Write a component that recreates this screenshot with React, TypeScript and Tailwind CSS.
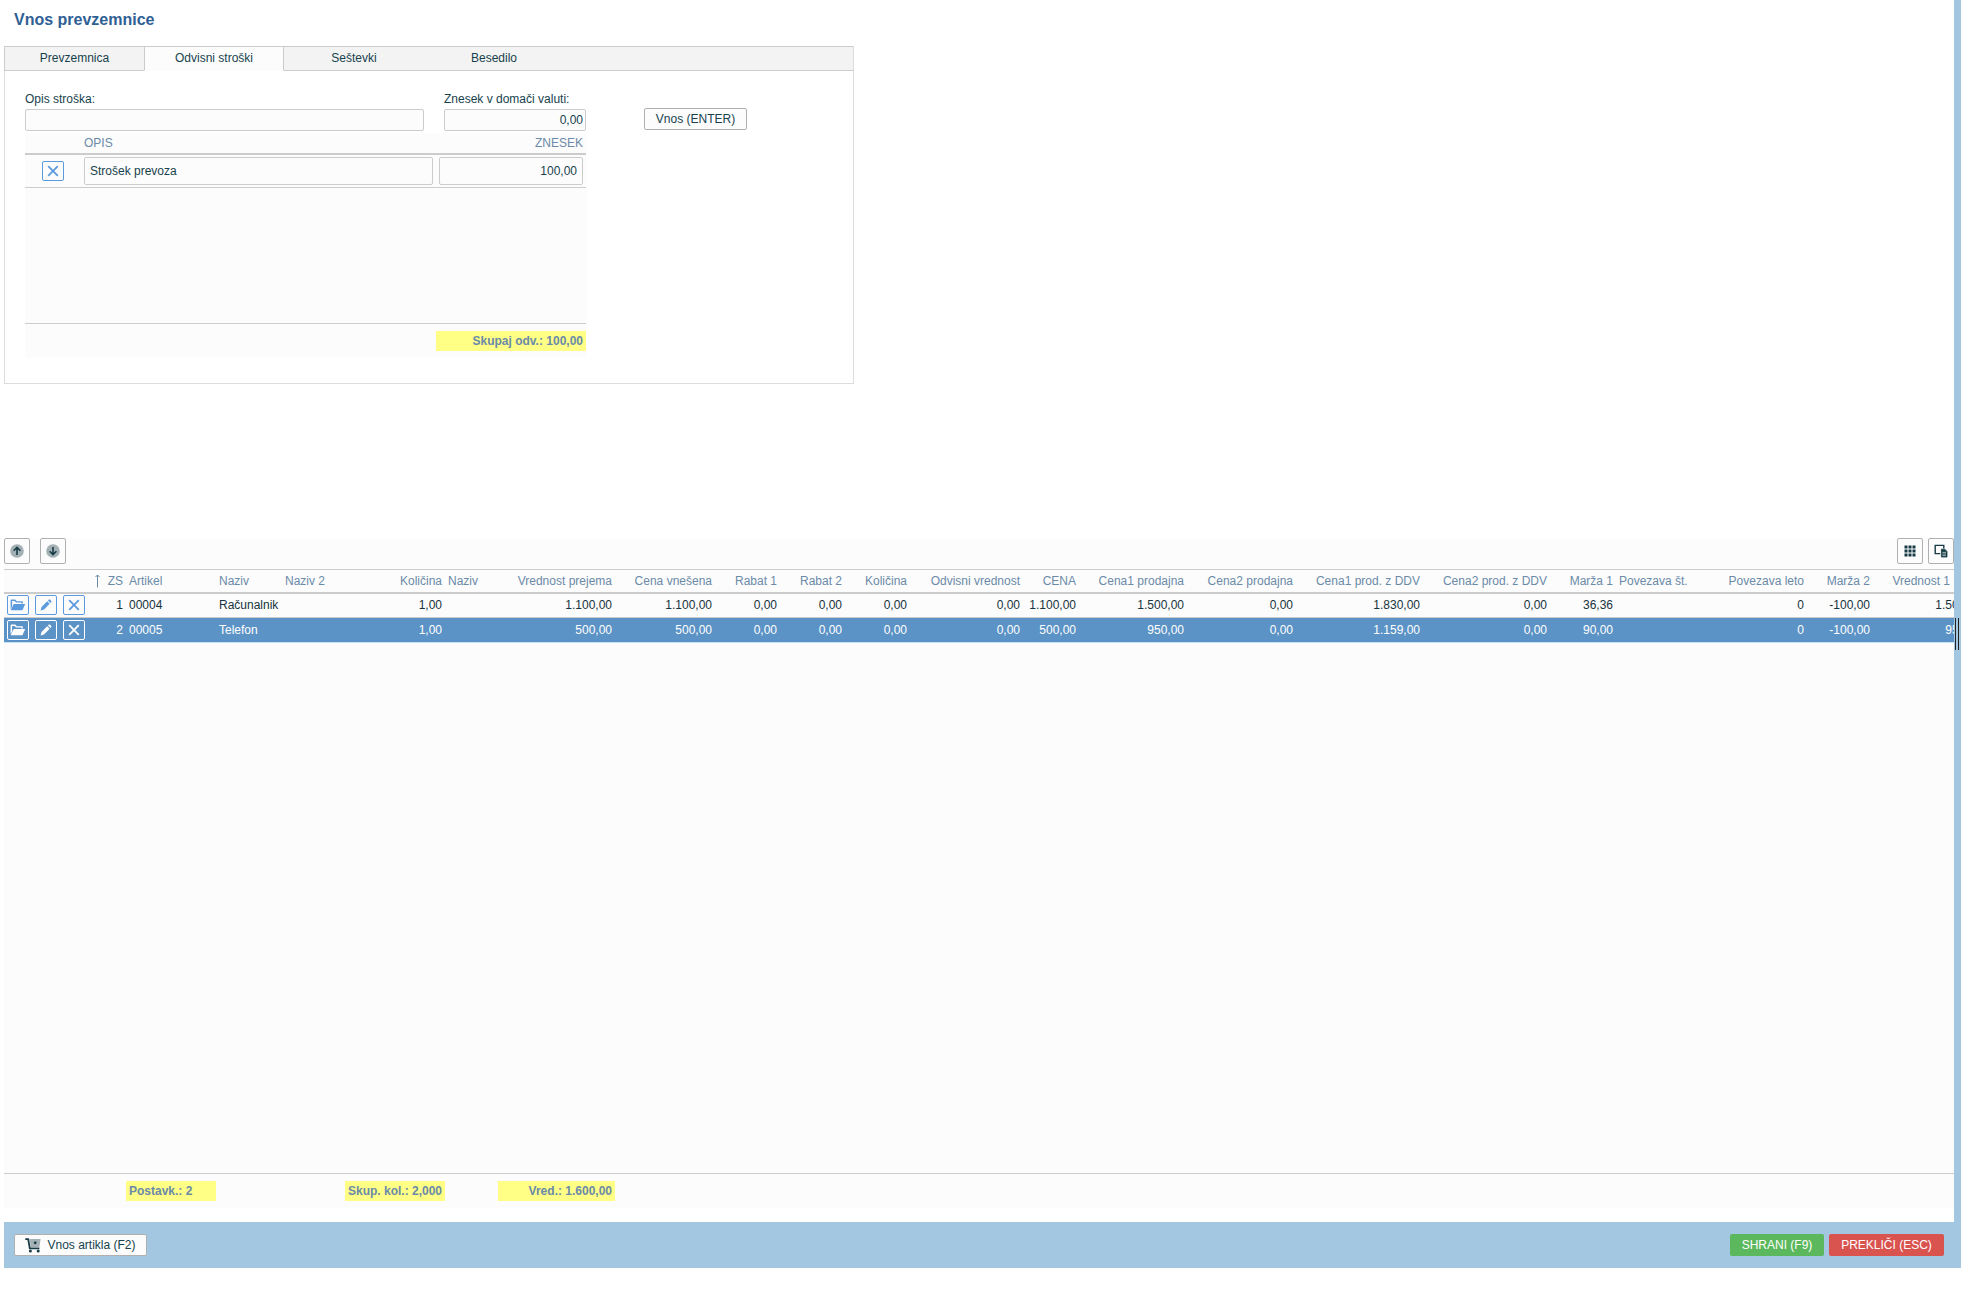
import { useState } from 'react';

type Column = {
  key: string;
  title: string;
  width: string;
  left?: boolean;
};

const columns: Column[] = [
  { key: 'artikel', title: 'Artikel', width: 'w-[90px]', left: true },
  { key: 'naziv', title: 'Naziv', width: 'w-[66px]', left: true },
  { key: 'naziv2', title: 'Naziv 2', width: 'w-[63px]', left: true },
  { key: 'kolicina', title: 'Količina', width: 'w-[100px]' },
  { key: 'nazivEm', title: 'Naziv', width: 'w-[53px]', left: true },
  { key: 'vrednostPrejema', title: 'Vrednost prejema', width: 'w-[117px]' },
  { key: 'cenaVnesena', title: 'Cena vnešena', width: 'w-[100px]' },
  { key: 'rabat1', title: 'Rabat 1', width: 'w-[65px]' },
  { key: 'rabat2', title: 'Rabat 2', width: 'w-[65px]' },
  { key: 'kolicina2', title: 'Količina', width: 'w-[65px]' },
  { key: 'odvisni', title: 'Odvisni vrednost', width: 'w-[113px]' },
  { key: 'cena', title: 'CENA', width: 'w-[56px]' },
  { key: 'cena1', title: 'Cena1 prodajna', width: 'w-[108px]' },
  { key: 'cena2', title: 'Cena2 prodajna', width: 'w-[109px]' },
  { key: 'cena1Ddv', title: 'Cena1 prod. z DDV', width: 'w-[127px]' },
  { key: 'cena2Ddv', title: 'Cena2 prod. z DDV', width: 'w-[127px]' },
  { key: 'marza1', title: 'Marža 1', width: 'w-[66px]' },
  { key: 'povezavaSt', title: 'Povezava št.', width: 'w-[84px]', left: true },
  { key: 'povezavaLeto', title: 'Povezava leto', width: 'w-[107px]' },
  { key: 'marza2', title: 'Marža 2', width: 'w-[66px]' },
  { key: 'vrednost1', title: 'Vrednost 1', width: 'w-[112px]' },
];

const rows: Record<string, string>[] = [
  {
    zs: '1', artikel: '00004', naziv: 'Računalnik', kolicina: '1,00',
    vrednostPrejema: '1.100,00', cenaVnesena: '1.100,00', rabat1: '0,00', rabat2: '0,00',
    kolicina2: '0,00', odvisni: '0,00', cena: '1.100,00', cena1: '1.500,00', cena2: '0,00',
    cena1Ddv: '1.830,00', cena2Ddv: '0,00', marza1: '36,36', povezavaLeto: '0',
    marza2: '-100,00', vrednost1: '1.500,00',
  },
  {
    zs: '2', artikel: '00005', naziv: 'Telefon', kolicina: '1,00',
    vrednostPrejema: '500,00', cenaVnesena: '500,00', rabat1: '0,00', rabat2: '0,00',
    kolicina2: '0,00', odvisni: '0,00', cena: '500,00', cena1: '950,00', cena2: '0,00',
    cena1Ddv: '1.159,00', cena2Ddv: '0,00', marza1: '90,00', povezavaLeto: '0',
    marza2: '-100,00', vrednost1: '950,00',
  },
];

const tabs = ['Prevzemnica', 'Odvisni stroški', 'Seštevki', 'Besedilo'];

function CloseIcon() {
  return (
    <svg width="12" height="12" viewBox="0 0 12 12" fill="none" stroke="currentColor" strokeWidth="1.8">
      <path d="M1.2 1.2l9.6 9.6M10.8 1.2l-9.6 9.6" />
    </svg>
  );
}

function FolderIcon() {
  return (
    <svg width="16" height="12" viewBox="0 0 16 12" fill="currentColor">
      <path d="M1.4 0.6h3.8l1.5 1.6h5.2c.6 0 1 .4 1 1v1.2h-1.5V3.6H6L4.5 2.1H2.1v5.1L0.6 10.4V1.4c0-.5.3-.8.8-.8z" />
      <path d="M4.4 5h10.8L12.8 10.6c-.2.4-.5.7-1 .7H1.2c-.3 0-.4-.2-.3-.5L3.4 5.6c.2-.4.5-.6 1-.6z" />
    </svg>
  );
}

function PencilIcon() {
  return (
    <svg width="12" height="12" viewBox="0 0 12 12" fill="currentColor">
      <path d="M0.6 11.4l.9-3.4L7.2 2.3l2.5 2.5L4 10.5z" />
      <path d="M7.9 1.6l.8-.8c.4-.4 1-.4 1.4 0l1.1 1.1c.4.4.4 1 0 1.4l-.8.8z" />
    </svg>
  );
}

function ArrowCircleIcon({ down }: { down?: boolean }) {
  return (
    <svg width="14" height="14" viewBox="0 0 14 14" fill="none">
      <circle cx="7" cy="7" r="6.8" fill="#a3b1b5" />
      <path
        d={down ? 'M7 3v7.6M3.6 7.2L7 10.6l3.4-3.4' : 'M7 11V3.4M3.6 6.8L7 3.4l3.4 3.4'}
        stroke="#173b45"
        strokeWidth="1.6"
      />
    </svg>
  );
}

function GridIcon() {
  return (
    <svg width="12" height="12" viewBox="0 0 12 12" fill="#173b45">
      {[0, 4, 8].map((y) => [0, 4, 8].map((x) => <rect key={`${x}-${y}`} x={x + 0.5} y={y + 0.5} width="3" height="3" />))}
    </svg>
  );
}

function ExportIcon() {
  return (
    <svg width="14" height="14" viewBox="0 0 14 14" fill="none" stroke="#173b45">
      <path d="M6.2 9.6H1.2V1.4h8.6v3" strokeWidth="1.4" />
      <path d="M7.4 5.2h3.4l2.2 2.2v5.6H7.4z" fill="#173b45" strokeWidth=".8" />
      <path d="M8.4 8.4h3.6M8.4 10h3.6M8.4 11.6h3.6" stroke="#fcfcfc" strokeWidth=".6" />
    </svg>
  );
}

function CartIcon() {
  return (
    <svg width="16" height="15" viewBox="0 0 16 15" fill="none">
      <path d="M4.4 1h11.2L14.4 9H5.8z" fill="#a3b1b5" />
      <circle cx="10.2" cy="4.8" r="1.4" fill="#173b45" />
      <path d="M0.3 1.2h2.9L4.8 10.4h9.6" stroke="#173b45" strokeWidth="1.8" />
      <circle cx="5.4" cy="13" r="1.5" fill="#173b45" />
      <circle cx="13.2" cy="13" r="1.5" fill="#173b45" />
    </svg>
  );
}

function IconButton({ label, selected, children }: { label: string; selected?: boolean; children: React.ReactNode }) {
  return (
    <button
      aria-label={label}
      className={`flex h-5 w-[22px] items-center justify-center rounded-xs border ${
        selected ? 'border-white text-white' : 'border-[#5c9ade] text-[#5c9ade]'
      }`}
    >
      {children}
    </button>
  );
}

function ToolButton({ label, children }: { label: string; children: React.ReactNode }) {
  return (
    <button
      aria-label={label}
      className="flex size-[26px] shrink-0 items-center justify-center rounded-xs border border-[#b0b0b0] bg-[#fcfcfc]"
    >
      {children}
    </button>
  );
}

function CostPanel() {
  const [activeTab, setActiveTab] = useState(1);

  return (
    <section className="h-[338px] w-[850px] border border-[#ddd] border-t-[#ccc] bg-white">
      <div role="tablist" className="-ml-px flex h-6 border-l border-[#ccc] bg-[#f3f3f3]">
        {tabs.map((tab, i) => (
          <button
            key={tab}
            role="tab"
            aria-selected={i === activeTab}
            onClick={() => setActiveTab(i)}
            className={`border-b pb-px ${i === 0 ? 'w-[139px]' : 'w-[140px]'} ${
              i === activeTab ? 'border-x border-x-[#ccc] border-b-[#fcfcfc] bg-[#fcfcfc]' : 'border-[#ccc]'
            }`}
          >
            {tab}
          </button>
        ))}
        <div className="flex-1 border-b border-[#ccc]" />
      </div>

      <div className="px-5 pt-5">
        <div className="flex items-end">
          <div className="w-[399px]">
            <label htmlFor="opis" className="block h-[18px] leading-4">Opis stroška:</label>
            <input id="opis" className="block h-[22px] w-full rounded-xs border border-[#ccc] bg-[#fcfcfc] px-1" />
          </div>
          <div className="ml-5 w-[142px]">
            <label htmlFor="znesek" className="block h-[18px] leading-4">Znesek v domači valuti:</label>
            <input
              id="znesek"
              defaultValue="0,00"
              className="block h-[22px] w-full rounded-xs border border-[#ccc] bg-[#fcfcfc] px-0.5 text-right"
            />
          </div>
          <button className="mb-px ml-[58px] h-[22px] w-[103px] rounded-xs border border-[#b0b0b0] bg-[#fcfcfc]">
            Vnos (ENTER)
          </button>
        </div>

        <div className="mt-0.5 flex h-[225px] w-[561px] flex-col bg-[#fcfcfc]">
          <table className="w-full table-fixed border-collapse">
            <thead>
              <tr className="h-[21px] border-b-2 border-[#ccc] text-[#6b8aa8]">
                <th className="w-[59px]" aria-label="Briši" />
                <th className="text-left font-normal">OPIS</th>
                <th className="w-[150px] pr-[3px] text-right font-normal">ZNESEK</th>
              </tr>
            </thead>
            <tbody>
              <tr className="h-[33px] border-b border-[#ccc]">
                <td className="pl-[17px]">
                  <IconButton label="Briši strošek"><CloseIcon /></IconButton>
                </td>
                <td className="pr-[3px]">
                  <input
                    aria-label="Opis"
                    defaultValue="Strošek prevoza"
                    className="block h-7 w-full rounded-xs border border-[#ccc] bg-[#fcfcfc] px-[5px]"
                  />
                </td>
                <td className="pr-[3px] pl-[3px]">
                  <input
                    aria-label="Znesek"
                    defaultValue="100,00"
                    className="block h-7 w-full rounded-xs border border-[#ccc] bg-[#fcfcfc] px-[5px] text-right"
                  />
                </td>
              </tr>
            </tbody>
          </table>
          <div className="mt-auto flex h-[35px] justify-end border-t border-[#ccc] pt-[7px]">
            <div className="h-5 w-[150px] bg-[#ffff85] pr-[3px] text-right leading-5 font-bold text-[#6b8aa8]">
              Skupaj odv.: 100,00
            </div>
          </div>
        </div>
      </div>
    </section>
  );
}

function ItemsTable() {
  const [selected, setSelected] = useState(1);

  return (
    <table className="w-[1981px] table-fixed border-collapse whitespace-nowrap">
      <thead>
        <tr className="h-[23px] border-t border-b-2 border-[#ccc] text-[#6b8aa8]">
          <th className="w-[85px]" aria-label="Akcije" />
          <th className="w-[37px] pr-[3px] font-normal">
            <div className="flex items-center justify-between pl-1">
              <svg width="9" height="14" viewBox="0 0 9 14" fill="none" stroke="currentColor">
                <path d="M4.5 13.5V1M2.5 3l2-2 2 2" />
              </svg>
              ZS
            </div>
          </th>
          {columns.map((col) => (
            <th
              key={col.key}
              className={`font-normal ${col.width} ${col.left ? 'pl-[3px] text-left' : 'text-right'} ${
                col.key === 'vrednost1' ? 'pr-[35px]' : col.left ? '' : 'pr-[3px]'
              }`}
            >
              {col.title}
            </th>
          ))}
        </tr>
      </thead>
      <tbody>
        {rows.map((row, i) => (
          <tr
            key={row.zs}
            onClick={() => setSelected(i)}
            className={`h-[25px] border-b ${
              i === selected ? 'border-[#c5e0f5] bg-[#5c93c6] text-white' : 'border-[#ccc] text-[#17333d]'
            }`}
          >
            <td>
              <div className="flex gap-1.5 pl-[3px]">
                <IconButton label="Odpri" selected={i === selected}><FolderIcon /></IconButton>
                <IconButton label="Uredi" selected={i === selected}><PencilIcon /></IconButton>
                <IconButton label="Briši" selected={i === selected}><CloseIcon /></IconButton>
              </div>
            </td>
            <td className="pr-[3px] text-right">{row.zs}</td>
            {columns.map((col) => (
              <td key={col.key} className={col.left ? 'pl-[3px]' : 'pr-[3px] text-right'}>
                {row[col.key]}
              </td>
            ))}
          </tr>
        ))}
      </tbody>
    </table>
  );
}

export default function App() {
  return (
    <div className="flex h-screen flex-col bg-white pb-[26px] pl-1 font-['Liberation_Sans',Arial,sans-serif] text-xs text-[#17424d]">
      <div className="flex min-h-0 flex-1">
        <main className="flex min-w-0 flex-1 flex-col pb-3.5">
          <h1 className="h-[46px] pt-2 pl-2.5 text-base font-bold text-[#2f6094]">Vnos prevzemnice</h1>
          <CostPanel />

          <section className="mt-[154px] flex min-h-0 flex-1 flex-col overflow-hidden bg-[#fcfcfc]">
            <div className="flex h-[31px] items-start">
              <ToolButton label="Premakni gor"><ArrowCircleIcon /></ToolButton>
              <div className="ml-2.5 flex-1">
                <ToolButton label="Premakni dol"><ArrowCircleIcon down /></ToolButton>
              </div>
              <div className="flex gap-[5px]">
                <ToolButton label="Stolpci"><GridIcon /></ToolButton>
                <ToolButton label="Izvoz"><ExportIcon /></ToolButton>
              </div>
            </div>
            <div className="min-h-0 flex-1 overflow-hidden">
              <ItemsTable />
            </div>
            <div className="flex h-[35px] border-t border-[#ccc] pt-[7px] pl-[122px] leading-5 font-bold text-[#6b8aa8]">
              <div className="h-5 w-[90px] bg-[#ffff85] pl-[3px]">Postavk.: 2</div>
              <div className="ml-[129px] h-5 w-[100px] bg-[#ffff85] pr-[3px] text-right">Skup. kol.: 2,000</div>
              <div className="ml-[53px] h-5 w-[117px] bg-[#ffff85] pr-[3px] text-right">Vred.: 1.600,00</div>
            </div>
          </section>
        </main>

        {/* side splitter */}
        <div className="flex w-[7px] flex-col bg-[#a3c7e0] pt-[618px]">
          <div className="ml-px h-8 w-1 border-x border-[#222]" />
        </div>
      </div>

      <footer className="flex h-[46px] items-center gap-[5px] bg-[#a3c7e0] pr-[17px] pl-2.5">
        <button className="mr-auto flex h-[22px] w-[133px] items-center justify-center gap-1.5 rounded-xs border border-[#b0b0b0] bg-[#fcfcfc]">
          <CartIcon />
          Vnos artikla (F2)
        </button>
        <button className="h-[22px] w-[94px] rounded-xs bg-[#5cb85c] text-white">SHRANI (F9)</button>
        <button className="h-[22px] w-[115px] rounded-xs bg-[#d9534f] text-white">PREKLIČI (ESC)</button>
      </footer>
    </div>
  );
}
